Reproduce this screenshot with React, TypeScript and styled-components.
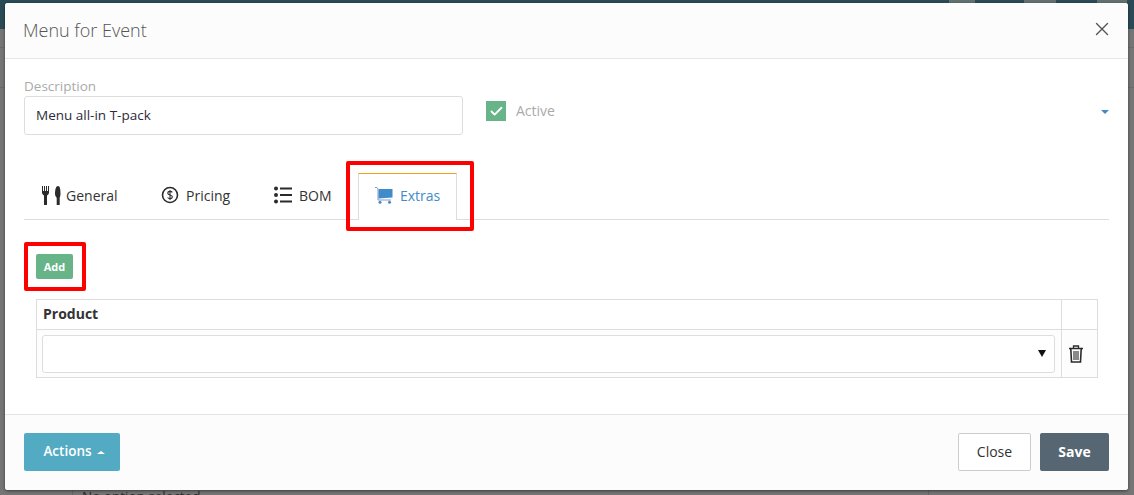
import React from "react";
import styled, { createGlobalStyle } from "styled-components";
import { X, Check } from "lucide-react";

const Global = createGlobalStyle`
    html, body {
        margin: 0;
        padding: 0;
        height: 100%;
        overflow: hidden;
        background: #757575;
        font-family: "Open Sans", "Liberation Sans", sans-serif;
    }
`

const Page = styled.div`
    width: 1134px;
    height: 495px;
    overflow: hidden;
    position: relative;
    background: #757575;
`

const TopBar = styled.div`
    position: absolute;
    top: 0;
    left: 0;
    right: 0;
    height: 29px;
    background: #2a4a55;
`

const TopPatch = styled.div<{ $x: number; $w: number }>`
    position: absolute;
    top: 0;
    left: ${p => p.$x}px;
    width: ${p => p.$w}px;
    height: 3px;
    background: #62706f;
`

const BgLine = styled.div<{ $y: number }>`
    position: absolute;
    top: ${p => p.$y}px;
    left: 0;
    right: 0;
    height: 1px;
    background: #6a6a6a;
`

const BgColumn = styled.div<{ $x: number }>`
    position: absolute;
    top: 490px;
    bottom: 0;
    left: ${p => p.$x}px;
    width: 1px;
    background: #666;
`

const BehindText = styled.div`
    position: absolute;
    left: 82px;
    top: 488px;
    font-size: 13.5px;
    line-height: 16px;
    color: #2c2c2c;
`

const Modal = styled.div`
    position: absolute;
    top: 3px;
    left: 5px;
    width: 1123px;
    height: 487px;
    display: flex;
    flex-direction: column;
    background: #fff;
    border-radius: 3px;
    box-shadow: 0 1px 3px rgba(0, 0, 0, 0.5);
    overflow: hidden;
`

const Header = styled.div`
    height: 55px;
    flex: none;
    display: flex;
    align-items: center;
    justify-content: space-between;
    padding: 0 15px 0 18px;
    background: #fcfcfc;
    border-bottom: 1px solid #e5e5e5;
`

const Title = styled.div`
    font-size: 18px;
    font-weight: 300;
    color: #555;
    margin-top: -2px;
`

const CloseX = styled(X)`
    width: 22px;
    height: 22px;
    color: #555;
    margin-top: -4px;
`

const Body = styled.div`
    flex: 1;
    padding: 18px 19px 0 19px;
    display: flex;
    flex-direction: column;
`

const TopRow = styled.div`
    display: flex;
    height: 58px;
`

const Field = styled.div`
    width: 439px;
    display: flex;
    flex-direction: column;
`

const FieldLabel = styled.label`
    font-size: 13.5px;
    line-height: 19px;
    color: #aaa;
`

const TextBox = styled.div`
    height: 37px;
    border: 1px solid #ddd;
    border-radius: 3px;
    padding-left: 11px;
    display: flex;
    align-items: center;
    font-size: 13.5px;
    line-height: 16px;
    color: #2c2c3a;

    & > span {
        margin-top: -2px;
    }
`

const ActiveRow = styled.div`
    flex: 1;
    display: flex;
    align-items: flex-start;
    padding: 24px 0 0 23px;
`

const CheckBox = styled.div`
    width: 20px;
    height: 20px;
    background: #66b488;
    display: flex;
    align-items: center;
    justify-content: center;
    color: #fff;
`

const ActiveLabel = styled.span`
    margin-left: 10px;
    font-size: 14px;
    line-height: 20px;
    color: #aaa;
`

const Caret = styled.span`
    margin-left: auto;
    margin-top: 9px;
    width: 0;
    height: 0;
    border-left: 4px solid transparent;
    border-right: 4px solid transparent;
    border-top: 4px solid #428bca;
`

const Tabs = styled.div`
    margin-top: 38px;
    height: 46px;
    display: flex;
    align-items: flex-end;
    border-bottom: 1px solid #ddd;
`

const Tab = styled.div<{ $active?: boolean; $w: number; $pad: number; $gap?: number }>`
    width: ${p => p.$w}px;
    height: 46px;
    box-sizing: border-box;
    display: flex;
    align-items: center;
    gap: ${p => p.$gap ?? 7}px;
    padding: 0 0 ${p => (p.$active ? 4 : 2)}px ${p => p.$pad}px;
    font-size: 14px;
    color: ${p => (p.$active ? "#428bca" : "#333")};
    background: #fff;
    ${p => p.$active && `
        border: 1px solid #ddd;
        border-top: 1px solid #f0a020;
        border-bottom: none;
        margin-bottom: -1px;
        height: 47px;
    `}
`

const Highlight = styled.div`
    position: absolute;
    border: 4px solid #f00;
    border-radius: 2px;
    box-sizing: border-box;
`

const TabHighlight = styled(Highlight)`
    left: 341px;
    top: 158px;
    width: 128px;
    height: 70px;
`

const AddHighlight = styled(Highlight)`
    left: 19px;
    top: 239px;
    width: 62px;
    height: 49px;
`

const AddButton = styled.button`
    align-self: flex-start;
    margin: 34px 0 0 12px;
    width: 37px;
    height: 25px;
    border: none;
    border-radius: 2px;
    background: #66b488;
    color: #fff;
    font-family: inherit;
    font-size: 11px;
    font-weight: 700;
    padding: 0;
`

const Table = styled.div`
    margin: 20px 11px 0 12px;
    border: 1px solid #ddd;
    display: grid;
    grid-template-columns: 1fr 36px;
    grid-template-rows: 30px 47px;
`

const HeadCell = styled.div`
    display: flex;
    align-items: center;
    padding: 0 0 2px 6px;
    font-size: 14px;
    font-weight: 700;
    color: #333;
    border-bottom: 1px solid #ddd;
`

const Cell = styled.div`
    display: flex;
    align-items: center;
    padding: 0 6px 0 5px;
    background: #fdfdfd;
`

const HeadIconCell = styled.div`
    border-left: 1px solid #ddd;
    border-bottom: 1px solid #ddd;
`

const TrashCell = styled.div`
    border-left: 1px solid #ddd;
    display: flex;
    align-items: center;
    padding-left: 7px;
    background: #fdfdfd;
`

const SelectBox = styled.div`
    flex: 1;
    height: 36px;
    border: 1px solid #ddd;
    border-radius: 3px;
    display: flex;
    align-items: center;
    justify-content: flex-end;
    padding-right: 8px;
    background: #fff;
`

const SelectArrow = styled.span`
    width: 0;
    height: 0;
    border-left: 4px solid transparent;
    border-right: 4px solid transparent;
    border-top: 7px solid #111;
    margin-top: -1px;
`

const Footer = styled.div`
    height: 74px;
    flex: none;
    display: flex;
    align-items: center;
    justify-content: space-between;
    padding: 0 19px 1px 19px;
    background: #fcfcfc;
    border-top: 1px solid #e5e5e5;
`

const ActionsButton = styled.button`
    width: 96px;
    height: 38px;
    border: none;
    border-radius: 2px;
    background: #52abc3;
    color: #fff;
    font-family: inherit;
    font-size: 13.5px;
    font-weight: 600;
    display: flex;
    align-items: center;
    justify-content: center;
    gap: 5px;
    padding: 0 0 3px 4px;
`

const UpCaret = styled.span`
    width: 0;
    height: 0;
    border-left: 4px solid transparent;
    border-right: 4px solid transparent;
    border-bottom: 3px solid #fff;
    margin-top: 3px;
`

const RightButtons = styled.div`
    display: flex;
    gap: 9px;
`

const FootButton = styled.button<{ $dark?: boolean }>`
    width: ${p => (p.$dark ? 69 : 73)}px;
    height: 38px;
    border-radius: 2px;
    border: ${p => (p.$dark ? "none" : "1px solid #ccc")};
    background: ${p => (p.$dark ? "#566672" : "#fff")};
    color: ${p => (p.$dark ? "#fff" : "#333")};
    font-family: inherit;
    font-size: 14px;
    font-weight: ${p => (p.$dark ? 700 : 400)};
    padding: 0 0 2px 0;
`

const Cutlery = () => (
    <svg width="21" height="19" viewBox="0 0 21 19" fill="#2b2b2b">
        <path d="M1 0h1v5h1V0h1v5h1V0h1v5h1V0h1v6.5C8 8 7 9 6 9.4V19H3V9.4C2 9 1 8 1 6.5z" />
        <path d="M14 7.5C14 3.5 15 0 17 0s2.5 3.5 2.5 7.5c0 2-.4 3.5-.8 4.3V19h-3v-7.2c-.9-.8-1.7-2.3-1.7-4.3z" />
    </svg>
)

const DollarCircle = () => (
    <svg width="18" height="18" viewBox="0 0 18 18" fill="none" stroke="#2b2b2b">
        <circle cx="9" cy="9" r="7.5" strokeWidth="1.6" />
        <path d="M11.3 6.4C10.8 5.7 10 5.4 9 5.4c-1.3 0-2.2.7-2.2 1.8 0 2.4 4.5 1.2 4.5 3.6 0 1.1-1 1.8-2.3 1.8-1 0-1.9-.4-2.4-1.1M9 4v10" strokeWidth="1.1" />
    </svg>
)

const ListIcon = () => (
    <svg width="18" height="18" viewBox="0 0 18 18" fill="#2b2b2b">
        <circle cx="2" cy="2.5" r="2" />
        <circle cx="2" cy="9" r="2" />
        <circle cx="2" cy="15.5" r="2" />
        <rect x="6" y="1.5" width="12" height="2" />
        <rect x="6" y="8" width="12" height="2" />
        <rect x="6" y="14.5" width="12" height="2" />
    </svg>
)

const CartIcon = () => (
    <svg width="18" height="17" viewBox="0 0 18 17">
        <path d="M0 .5h2l1 1.5v11h13" fill="none" stroke="#7f9cc4" strokeWidth="1" />
        <path d="M3.5 2H17.5v8.5L3.5 11.5z" fill="#428bca" />
        <circle cx="5" cy="15.3" r="1.5" fill="#428bca" />
        <circle cx="14.5" cy="15.3" r="1.5" fill="#428bca" />
    </svg>
)

const TrashIcon = () => (
    <svg width="14" height="18" viewBox="0 0 14 18" fill="none" stroke="#2b2b2b">
        <path d="M0 3.5h14" strokeWidth="1.6" />
        <path d="M4.5 3V1h5v2" strokeWidth="1.3" />
        <path d="M1.8 4l.7 13h9l.7-13" strokeWidth="1.6" />
        <path d="M5 6v9M7 6v9M9 6v9" strokeWidth="1.1" />
    </svg>
)

export default function App() {
    return (
        <Page>
            <Global />
            <TopBar />
            <TopPatch $x={949} $w={26} />
            <TopPatch $x={1024} $w={32} />
            <TopPatch $x={1097} $w={30} />
            <BgLine $y={47} />
            <BgLine $y={87} />
            <BgColumn $x={72} />
            <BgColumn $x={928} />
            <BehindText>No option selected</BehindText>
            <Modal>
                <Header>
                    <Title>Menu for Event</Title>
                    <CloseX strokeWidth={1.5} />
                </Header>
                <Body>
                    <TopRow>
                        <Field>
                            <FieldLabel>Description</FieldLabel>
                            <TextBox><span>Menu all-in T-pack</span></TextBox>
                        </Field>
                        <ActiveRow>
                            <CheckBox>
                                <Check size={15} strokeWidth={3} />
                            </CheckBox>
                            <ActiveLabel>Active</ActiveLabel>
                            <Caret />
                        </ActiveRow>
                    </TopRow>
                    <Tabs>
                        <Tab $w={116} $pad={17} $gap={4}><Cutlery />General</Tab>
                        <Tab $w={113} $pad={21}><DollarCircle />Pricing</Tab>
                        <Tab $w={105} $pad={21}><ListIcon />BOM</Tab>
                        <Tab $w={99} $pad={16} $active><CartIcon />Extras</Tab>
                    </Tabs>
                    <AddButton>Add</AddButton>
                    <Table>
                        <HeadCell>Product</HeadCell>
                        <HeadIconCell />
                        <Cell>
                            <SelectBox><SelectArrow /></SelectBox>
                        </Cell>
                        <TrashCell><TrashIcon /></TrashCell>
                    </Table>
                </Body>
                <Footer>
                    <ActionsButton>Actions <UpCaret /></ActionsButton>
                    <RightButtons>
                        <FootButton>Close</FootButton>
                        <FootButton $dark>Save</FootButton>
                    </RightButtons>
                </Footer>
                <TabHighlight />
                <AddHighlight />
            </Modal>
        </Page>
    );
}
